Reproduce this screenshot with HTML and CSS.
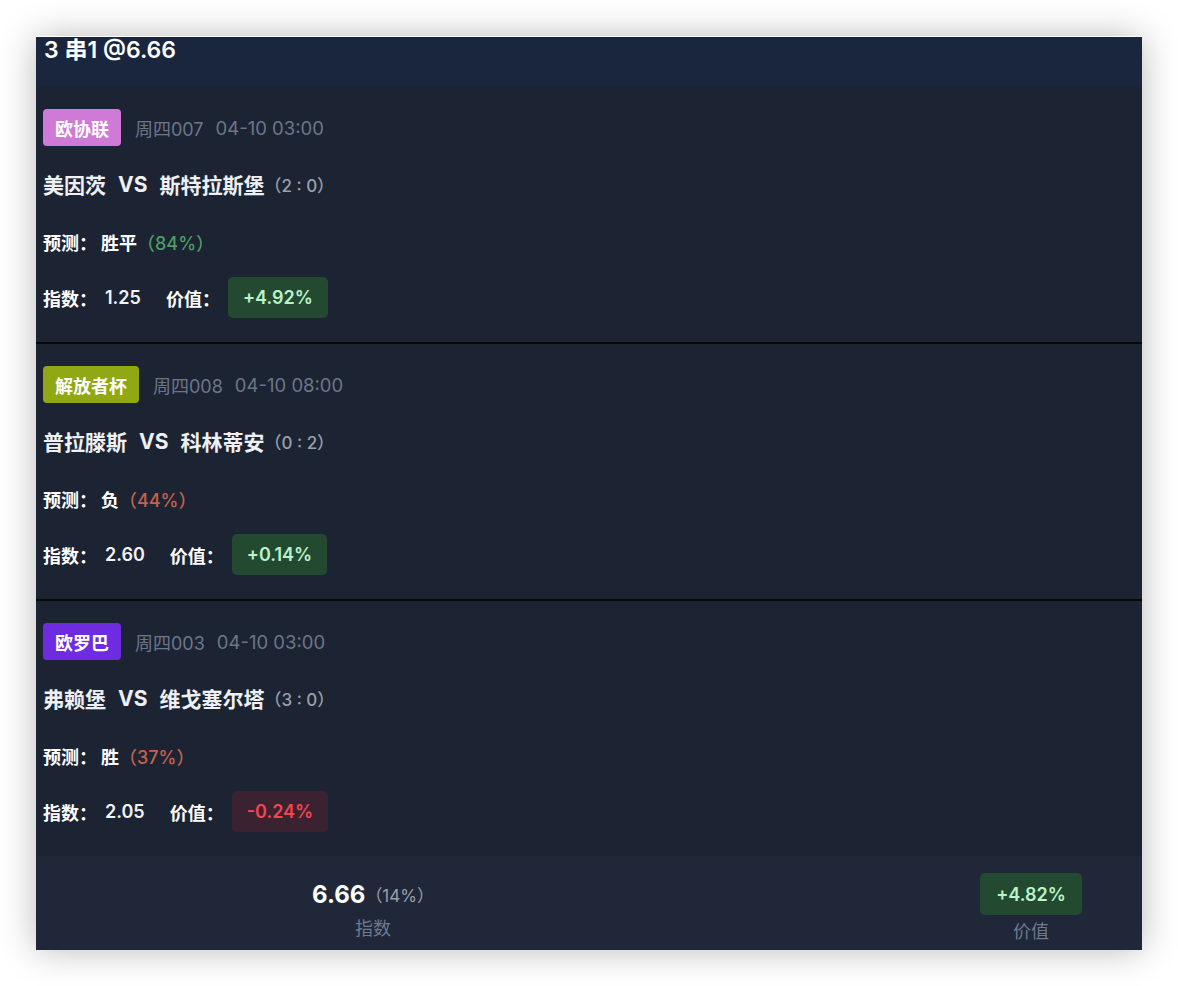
FILE: index.html
```html
<!DOCTYPE html>
<html lang="zh-CN">
<head>
<meta charset="utf-8">
<title>3 串1 @6.66</title>
<link rel="stylesheet" href="styles.css">
</head>
<body>
<div class="card">
  <header class="card-head">
    <h1 class="title">3 串1 @6.66</h1>
  </header>

  <section class="match">
    <div class="meta"><span class="league league-uecl">欧协联</span><span class="time">周四007</span><span class="date">04-10 03:00</span></div>
    <div class="teams">美因茨<span class="vs">VS</span>斯特拉斯堡<span class="score">（2 : 0）</span></div>
    <div class="pred"><span class="label">预测：</span><span class="pick">胜平</span><span class="pct pct-good">（84%）</span></div>
    <div class="odds"><span class="label">指数：</span><span class="num">1.25</span><span class="label">价值：</span><span class="value value-pos">+4.92%</span></div>
  </section>

  <section class="match">
    <div class="meta"><span class="league league-lib">解放者杯</span><span class="time">周四008</span><span class="date">04-10 08:00</span></div>
    <div class="teams">普拉滕斯<span class="vs">VS</span>科林蒂安<span class="score">（0 : 2）</span></div>
    <div class="pred"><span class="label">预测：</span><span class="pick">负</span><span class="pct pct-bad">（44%）</span></div>
    <div class="odds"><span class="label">指数：</span><span class="num">2.60</span><span class="label">价值：</span><span class="value value-pos">+0.14%</span></div>
  </section>

  <section class="match">
    <div class="meta"><span class="league league-uel">欧罗巴</span><span class="time">周四003</span><span class="date">04-10 03:00</span></div>
    <div class="teams">弗赖堡<span class="vs">VS</span>维戈塞尔塔<span class="score">（3 : 0）</span></div>
    <div class="pred"><span class="label">预测：</span><span class="pick">胜</span><span class="pct pct-bad">（37%）</span></div>
    <div class="odds"><span class="label">指数：</span><span class="num">2.05</span><span class="label">价值：</span><span class="value value-neg">-0.24%</span></div>
  </section>

  <footer class="summary">
    <div class="sum-col sum-odds">
      <div class="sum-main"><span class="sum-num">6.66</span><span class="sum-pct">（14%）</span></div>
      <div class="sum-label">指数</div>
    </div>
    <div class="sum-col sum-value">
      <div class="sum-main"><span class="value value-pos value-lg">+4.82%</span></div>
      <div class="sum-label sum-label-r">价值</div>
    </div>
  </footer>
</div>
</body>
</html>
```

FILE: styles.css
```css
* { box-sizing: border-box; }

html, body {
  margin: 0;
  padding: 0;
  background: #ffffff;
}

body {
  padding: 37px 36px 36px;
  font-family: Inter, "Noto Sans CJK SC", sans-serif;
  color: #f1f3f6;
}

.card {
  background: #1c2333;
  box-shadow: 0 -1px 0 #ffffff, 0 0 34px rgba(0, 0, 0, 0.28);
}

.card-head {
  background: #19263e;
  height: 50px;
  padding: 0 8px;
}

.title {
  margin: 0;
  font-size: 23px;
  line-height: 27px;
  font-weight: 600;
  color: #ffffff;
}

.match {
  padding: 22px 0 24px 7px;
  border-bottom: 2px solid #06080c;
  display: flex;
  flex-direction: column;
}

.match:last-of-type {
  border-bottom: none;
}

.meta {
  height: 37px;
  display: flex;
  align-items: center;
}

.league {
  height: 37px;
  padding: 0 12px;
  border-radius: 4px;
  display: inline-flex;
  align-items: center;
  font-size: 18px;
  font-weight: 600;
  color: #ffffff;
}

.league-uecl { background: #d07ad8; }
.league-lib { background: #8fa813; }
.league-uel { background: #6d2ce0; }

.time, .date {
  font-size: 18px;
  color: #6b7789;
}

.time { margin-left: 14px; }
.date { margin-left: 12px; font-size: 18.5px; }

.teams {
  margin-top: 18px;
  height: 40px;
  display: flex;
  align-items: center;
  font-size: 21px;
  font-weight: 600;
  color: #eef0f4;
}

.vs { margin: 0 12px; font-weight: 700; }

.score {
  font-size: 17px;
  font-weight: 500;
  color: #9aa0aa;
}

.pred {
  margin-top: 18px;
  height: 40px;
  display: flex;
  align-items: center;
  font-size: 18px;
  font-weight: 600;
}

.label {
  font-weight: 600;
  color: #ffffff;
}

.pick { margin-left: 4px; color: #ffffff; }

.pct { font-weight: 500; }
.pct-good { color: #4f9c63; }
.pct-bad { color: #c5624c; }

.odds {
  margin-top: 15px;
  height: 41px;
  display: flex;
  align-items: center;
  font-size: 18px;
  font-weight: 600;
}

.num {
  margin-left: 8px;
  margin-right: 25px;
  font-size: 18px;
}

.value {
  margin-left: 8px;
  height: 41px;
  padding: 0 15px;
  border-radius: 5px;
  display: inline-flex;
  align-items: center;
  font-size: 18px;
  font-weight: 600;
}

.value-pos { background: #234a30; color: #b8f3cb; }
.value-neg { background: #3a2230; color: #f0464f; }

.summary {
  background: #1f2738;
  height: 94px;
  padding-top: 17px;
  display: flex;
  align-items: flex-start;
}

.sum-col {
  display: flex;
  flex-direction: column;
  align-items: center;
}

.sum-odds { width: 674px; }
.sum-value { width: 222px; margin-left: auto; }

.sum-main {
  height: 42px;
  display: flex;
  align-items: center;
}

.sum-num {
  font-size: 24px;
  font-weight: 700;
  color: #ffffff;
}

.sum-pct {
  font-size: 17px;
  color: #9aa0aa;
}

.value-lg {
  margin-left: 0;
  height: 42px;
  padding: 0 16px;
}

.sum-label {
  margin-top: 2px;
  line-height: 24px;
  font-size: 18px;
  color: #6e7a8e;
}

.sum-label-r { margin-top: 5px; }
```
